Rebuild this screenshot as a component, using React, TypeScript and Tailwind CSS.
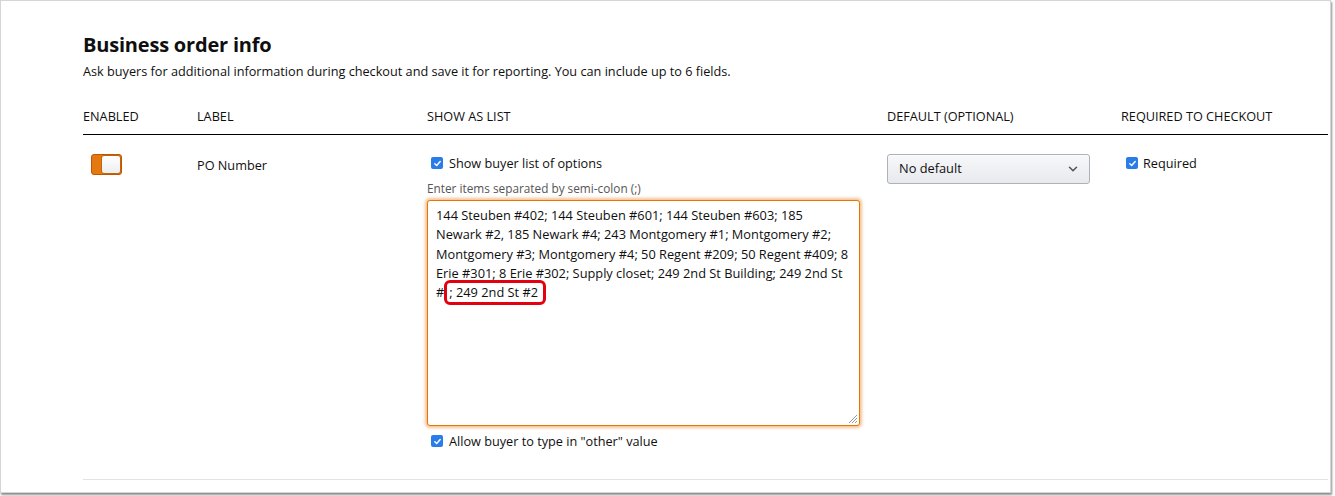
import { ChevronDown } from 'lucide-react';

const font = { fontFamily: '"Open Sans", "Noto Sans", sans-serif' };

function Check() {
  return (
    <span className="flex h-[12px] w-[12px] shrink-0 items-center justify-center rounded-[2px] bg-[#2a7ce8]">
      <svg width="9" height="9" viewBox="0 0 10 10" fill="none" aria-hidden>
        <path d="M2 5.2 4.1 7.3 8 2.8" stroke="#fff" strokeWidth="1.6" strokeLinecap="round" strokeLinejoin="round" />
      </svg>
    </span>
  );
}

function Toggle() {
  return (
    <div className="flex h-[21px] w-[31px] justify-end rounded-[3px] border border-[#c45500] bg-[#e47911]">
      <div className="h-full w-[20px] rounded-[3px] border border-[#c0670a] bg-gradient-to-b from-white to-[#eceef1]" />
    </div>
  );
}

const lines = [
  '144 Steuben #402; 144 Steuben #601; 144 Steuben #603; 185',
  'Newark #2, 185 Newark #4; 243 Montgomery #1; Montgomery #2;',
  'Montgomery #3; Montgomery #4; 50 Regent #209; 50 Regent #409; 8',
  'Erie #301; 8 Erie #302; Supply closet; 249 2nd St Building; 249 2nd St',
];

export default function App() {
  return (
    <div className="h-[496px] w-full bg-white text-[#0f0f0f]" style={font}>
      <div className="h-[493px] w-[1331px] border border-[#d5d5d5] bg-white pl-[82px] pr-[2px] pt-[30px] shadow-[1px_2px_2px_rgba(0,0,0,0.45)]">
        <h1 className="text-[20px] font-bold leading-[28px] tracking-[-0.2px]">Business order info</h1>
        <p className="mt-[3px] text-[12.7px] leading-[18px]">
          Ask buyers for additional information during checkout and save it for reporting. You can include up to 6 fields.
        </p>

        <div className="mt-[27px] grid grid-cols-[114px_230px_460px_234px_1fr] border-b border-black pb-[9px] text-[12.7px] leading-[18px]">
          <div>ENABLED</div>
          <div>LABEL</div>
          <div>SHOW AS LIST</div>
          <div>DEFAULT (OPTIONAL)</div>
          <div>REQUIRED TO CHECKOUT</div>
        </div>

        <div className="grid grid-cols-[114px_230px_460px_234px_1fr] border-b border-[#e3e3e3] pb-[29px] pt-[19px] text-[12.7px]">
          <div className="pl-[8px]">
            <Toggle />
          </div>
          <div className="pt-[2px] leading-[18px]">PO Number</div>
          <div>
            <label className="flex items-center gap-[6px] pl-[4px] leading-[18px]">
              <Check />
              Show buyer list of options
            </label>
            <div className="mt-[9px] text-[11.8px] leading-[14px] text-[#555]">Enter items separated by semi-colon (;)</div>
            <div className="relative mt-[5px] h-[226px] w-[433px] rounded-[3px] border border-[#e77600] bg-white px-[8px] pt-[5px] text-[12.8px] leading-[19.3px] shadow-[0_0_3px_2px_rgba(228,121,17,0.45)]">
              {lines.map((l) => (
                <div key={l} className="whitespace-nowrap">
                  {l}
                </div>
              ))}
              <div className="whitespace-nowrap">
                #
                <span className="relative pl-[5px] pr-[8px]">
                  ; 249 2nd St #2
                  <span className="absolute -bottom-[4px] -top-[3px] left-0 right-0 rounded-[6px] border-[3px] border-[#e3000f]" />
                </span>
              </div>
              <svg className="absolute bottom-[1px] right-[1px]" width="11" height="11" viewBox="0 0 11 11" aria-hidden>
                <path d="M10 2 2 10M10 5 5 10M10 8 8 10" stroke="#999" strokeWidth="1" />
              </svg>
            </div>
            <label className="mt-[6px] flex items-center gap-[6px] pl-[4px] leading-[18px]">
              <Check />
              Allow buyer to type in "other" value
            </label>
          </div>
          <div>
            <div className="flex h-[30px] w-[203px] items-center justify-between rounded-[3px] border border-[#adb1b8] bg-gradient-to-b from-[#f7f8fa] to-[#e7e9ec] pl-[11px] pr-[9px] text-[12.8px] shadow-[0_1px_0_rgba(255,255,255,0.6)_inset]">
              <span>No default</span>
              <ChevronDown size={14} strokeWidth={2.6} color="#555" />
            </div>
          </div>
          <div>
            <label className="flex items-center gap-[5px] pl-[5px] leading-[18px]">
              <Check />
              Required
            </label>
          </div>
        </div>
      </div>
    </div>
  );
}
